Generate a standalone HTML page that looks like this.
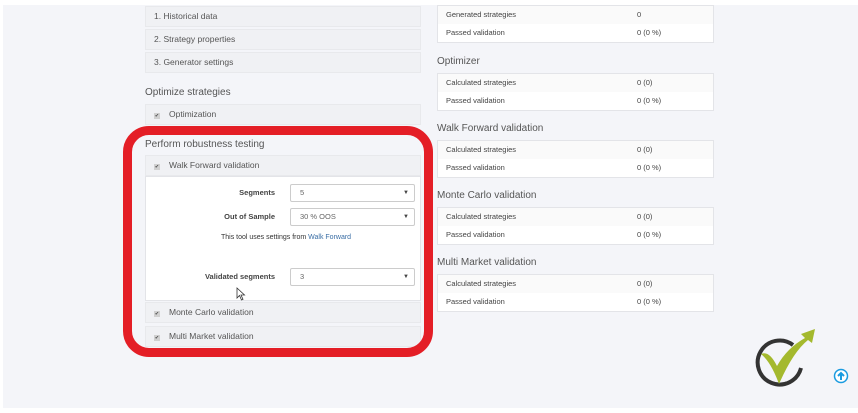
<!DOCTYPE html>
<html><head><meta charset="utf-8"><style>
*{margin:0;padding:0;box-sizing:border-box}
body{width:858px;height:413px;background:#fff;font-family:"Liberation Sans",sans-serif;color:#333;position:relative;overflow:hidden}
.bg{position:absolute;left:3px;top:5px;width:855px;height:403px;background:#f4f5f9}
.a{position:absolute}
.row{position:absolute;left:145px;width:276px;height:21px;background:#f0f1f4;border:1px solid #e8e9ec;font-size:8.5px;line-height:19px;padding-left:8px;color:#555}
.row .cb{display:inline-block;width:6px;height:6px;background:#d0d0d0;margin-right:9px;vertical-align:0px;font-size:5px;line-height:6px;color:#444;text-align:center}
.h{position:absolute;font-size:10px;color:#555}
.box{position:absolute;left:437px;width:277px;height:38px;background:#fff;border:1px solid #e3e4e8}
.box div{height:18px;font-size:7.5px;line-height:18px;padding-left:8px;position:relative;color:#444}
.box div:first-child{background:#fafafa}
.box span{position:absolute;left:199px}
.lbl{position:absolute;font-size:7.5px;font-weight:bold;color:#444;text-align:right;width:120px;left:155px}
.sel{position:absolute;left:290px;width:125px;height:18px;border:1px solid #ccc;border-radius:2px;background:#fff;font-size:7.5px;line-height:16px;padding-left:9px;color:#666}
.sel:after{content:"▼";position:absolute;right:5px;font-size:6px;color:#444}
</style></head><body>
<div class="bg"></div>
<div class="row" style="top:6px">1. Historical data</div>
<div class="row" style="top:29px">2. Strategy properties</div>
<div class="row" style="top:52px">3. Generator settings</div>
<div class="h" style="left:145px;top:87px">Optimize strategies</div>
<div class="row" style="top:104px"><span class="cb">✔</span>Optimization</div>
<div class="h" style="left:145px;top:139px">Perform robustness testing</div>
<div class="row" style="top:155px"><span class="cb">✔</span>Walk Forward validation</div>
<div class="a" style="left:145px;top:176px;width:276px;height:125px;background:#fff;border:1px solid #e3e4e8"></div>
<div class="lbl" style="top:188px">Segments</div>
<div class="sel" style="top:184px">5</div>
<div class="lbl" style="top:212px">Out of Sample</div>
<div class="sel" style="top:208px">30 % OOS</div>
<div class="a" style="left:221px;top:234px;font-size:7px;color:#333">This tool uses settings from <span style="color:#3a6ea5">Walk Forward</span></div>
<div class="lbl" style="top:272px">Validated segments</div>
<div class="sel" style="top:268px">3</div>
<svg class="a" style="left:236px;top:287px" width="10" height="14"><path d="M1 1 L1 11 L3.5 8.5 L5.5 13 L7 12.3 L5 8 L8.5 8 Z" fill="#fff" stroke="#333" stroke-width="0.8"/></svg>
<div class="row" style="top:302px"><span class="cb">✔</span>Monte Carlo validation</div>
<div class="row" style="top:326px"><span class="cb">✔</span>Multi Market validation</div>
<div class="a" style="left:123px;top:126px;width:310px;height:231px;border:9px solid #e41e26;border-radius:26px"></div>

<div class="box" style="top:5px"><div>Generated strategies<span>0</span></div><div>Passed validation<span>0 (0 %)</span></div></div>
<div class="h" style="left:437px;top:56px">Optimizer</div>
<div class="box" style="top:73px"><div>Calculated strategies<span>0 (0)</span></div><div>Passed validation<span>0 (0 %)</span></div></div>
<div class="h" style="left:437px;top:123px">Walk Forward validation</div>
<div class="box" style="top:140px"><div>Calculated strategies<span>0 (0)</span></div><div>Passed validation<span>0 (0 %)</span></div></div>
<div class="h" style="left:437px;top:190px">Monte Carlo validation</div>
<div class="box" style="top:207px"><div>Calculated strategies<span>0 (0)</span></div><div>Passed validation<span>0 (0 %)</span></div></div>
<div class="h" style="left:437px;top:257px">Multi Market validation</div>
<div class="box" style="top:274px"><div>Calculated strategies<span>0 (0)</span></div><div>Passed validation<span>0 (0 %)</span></div></div>

<svg class="a" style="left:755px;top:326px" width="62" height="62" viewBox="0 0 62 62">
<path d="M38 19 A22 22 0 1 0 46 42" fill="none" stroke="#333" stroke-width="4"/>
<path d="M6 28 Q14 24 22 40 Q32 22 50 12 L46 8 L60 3 L57 17 L53 14 Q38 26 24 58 Q16 36 6 28 Z" fill="#a4b92e"/>
</svg>
<svg class="a" style="left:833px;top:368px" width="16" height="16" viewBox="0 0 16 16"><circle cx="8" cy="8" r="6.5" fill="#fff" stroke="#1a9be0" stroke-width="1.5"/><path d="M8 12V5M5 8l3-3 3 3" fill="none" stroke="#1a9be0" stroke-width="2"/></svg>
</body></html>
